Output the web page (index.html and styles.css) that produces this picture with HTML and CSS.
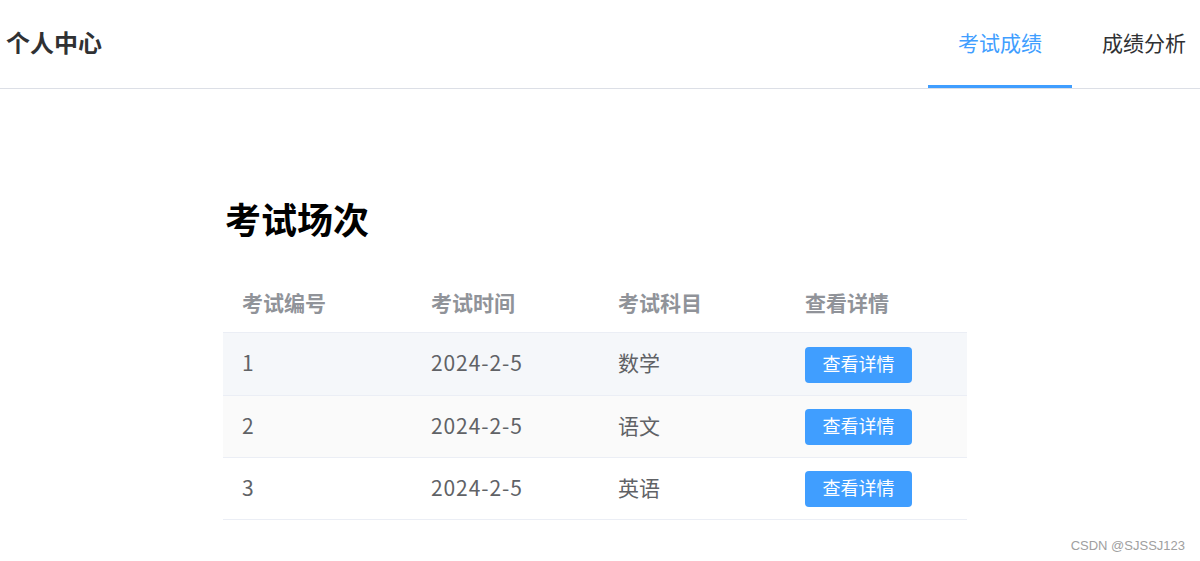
FILE: index.html
```html
<!DOCTYPE html>
<html lang="zh-CN">
<head>
<meta charset="utf-8">
<title>个人中心</title>
<link rel="stylesheet" href="styles.css">
</head>
<body>
<header class="topbar">
  <div class="brand">个人中心</div>
  <nav class="menu">
    <a class="menu-item active">考试成绩</a>
    <a class="menu-item">成绩分析</a>
  </nav>
</header>
<main class="content">
  <h2 class="page-title">考试场次</h2>
  <table class="exam-table">
    <colgroup>
      <col class="c1"><col class="c2"><col class="c3"><col class="c4">
    </colgroup>
    <thead>
      <tr><th>考试编号</th><th>考试时间</th><th>考试科目</th><th>查看详情</th></tr>
    </thead>
    <tbody>
      <tr class="hover"><td>1</td><td class="date">2024-2-5</td><td>数学</td><td class="action"><button class="btn">查看详情</button></td></tr>
      <tr class="stripe"><td>2</td><td class="date">2024-2-5</td><td>语文</td><td class="action"><button class="btn">查看详情</button></td></tr>
      <tr><td>3</td><td class="date">2024-2-5</td><td>英语</td><td class="action"><button class="btn">查看详情</button></td></tr>
    </tbody>
  </table>
</main>
<div class="watermark">CSDN @SJSSJ123</div>
</body>
</html>
```

FILE: styles.css
```css
html, body {
  margin: 0;
  padding: 0;
  background: #fff;
  overflow: hidden;
}
body {
  font-family: "Noto Sans CJK SC", "Noto Sans", sans-serif;
  width: 1200px;
  height: 561px;
  position: relative;
}
.topbar {
  display: flex;
  align-items: center;
  justify-content: space-between;
  height: 88px;
  border-bottom: 1px solid #dcdfe6;
  padding-left: 6px;
}
.brand {
  font-size: 24px;
  font-weight: 700;
  color: #303133;
  line-height: 1;
  padding-bottom: 4px;
}
.menu {
  display: flex;
  height: 88px;
  margin-right: -16px;
}
.menu-item {
  display: flex;
  align-items: center;
  box-sizing: border-box;
  height: 88px;
  padding: 0 30px 1px;
  font-size: 21px;
  color: #303133;
  border-bottom: 3px solid transparent;
}
.menu-item.active {
  color: #409eff;
  border-bottom-color: #409eff;
}
.content {
  margin-left: 223px;
  width: 744px;
}
.page-title {
  margin: 104px 0 37px 2px;
  font-size: 36px;
  line-height: 50px;
  font-weight: 700;
  color: #000;
}
.exam-table {
  width: 744px;
  border-collapse: collapse;
  table-layout: fixed;
  font-size: 21px;
}
.c1 { width: 189px; }
.c2 { width: 187px; }
.c3 { width: 187px; }
.c4 { width: 181px; }
.exam-table th {
  text-align: left;
  font-weight: 700;
  color: #909399;
  line-height: 28px;
  padding: 8px 19px 16px;
  border-bottom: 1px solid #ebeef5;
}
.exam-table td {
  color: #606266;
  line-height: 32px;
  padding: 12px 19px 16px;
  border-bottom: 1px solid #ebeef5;
  vertical-align: middle;
}
.exam-table td.action {
  line-height: 36px;
  padding: 13px 19px 12px;
}
.exam-table td.date {
  letter-spacing: 0.9px;
}
.exam-table tr.hover td { background: #f5f7fa; }
.exam-table tr.hover td.action { padding-top: 14px; }
.exam-table tr.stripe td { background: #fafafa; }
.btn {
  display: block;
  box-sizing: border-box;
  height: 36px;
  width: 107px;
  padding: 0 0 3px;
  border: none;
  border-radius: 4px;
  background: #409eff;
  color: #fff;
  font-family: inherit;
  font-size: 18px;
  line-height: 33px;
  letter-spacing: 0;
}
.watermark {
  position: absolute;
  right: 15px;
  top: 537px;
  font-family: "Liberation Sans", Arial, sans-serif;
  font-size: 13px;
  color: #a0a0a0;
  line-height: 18px;
}
```
